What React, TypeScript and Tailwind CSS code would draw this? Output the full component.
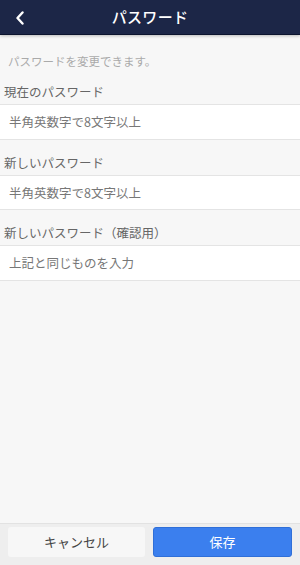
import React from "react";

const font = { fontFamily: '"Noto Sans CJK JP", "Noto Sans", sans-serif' };

function Field({ label, placeholder }: { label: string; placeholder: string }) {
  return (
    <div>
      <div className="h-[35px] pt-[15px] pl-[4px] text-[12.5px] leading-[16px] text-[#666]">{label}</div>
      <div className="h-[35.5px] bg-white border-y border-[#e4e4e4] flex items-center">
        <input
          className="w-full h-full bg-transparent outline-none pl-[9px] text-[12.5px] text-[#333] placeholder:text-[#777]"
          placeholder={placeholder}
          style={font}
        />
      </div>
    </div>
  );
}

export default function App() {
  return (
    <div className="h-screen w-full flex flex-col bg-[#f7f7f7]" style={font}>
      <header className="relative h-[35px] shrink-0 bg-[#1c2647] border-b border-[#0c142e] shadow-[0_1px_3px_rgba(0,0,0,0.25)] flex items-center justify-center">
        <button className="absolute left-[13px] top-[10px] w-[14px] h-[16px] flex items-center justify-center">
          <svg width="10" height="14" viewBox="0 0 10 14" fill="none">
            <path d="M7.5 1.5 L2.5 7 L7.5 12.5" stroke="white" strokeWidth="2.4" strokeLinecap="round" strokeLinejoin="round" />
          </svg>
        </button>
        <h1 className="text-white text-[15px] font-medium tracking-[0.3px]">パスワード</h1>
      </header>
      <main className="flex-1">
        <div className="h-[34px] pt-[19px] pl-[8px] text-[11.5px] leading-[14px] text-[#aaa]">パスワードを変更できます。</div>
        <Field label="現在のパスワード" placeholder="半角英数字で8文字以上" />
        <Field label="新しいパスワード" placeholder="半角英数字で8文字以上" />
        <Field label="新しいパスワード（確認用）" placeholder="上記と同じものを入力" />
      </main>
      <footer className="shrink-0 h-[42px] bg-[#eeeeee] border-t border-[#e2e2e2] flex gap-2 px-2 pt-[3px] pb-[8px]">
        <button className="flex-1 h-[30px] rounded-[3px] bg-[#f7f7f7] text-[13px] text-[#444]" style={font}>キャンセル</button>
        <button className="flex-1 h-[30px] rounded-[3px] bg-[#3b7fee] border border-[#2f6fd8] text-[13px] text-white" style={font}>保存</button>
      </footer>
    </div>
  );
}
